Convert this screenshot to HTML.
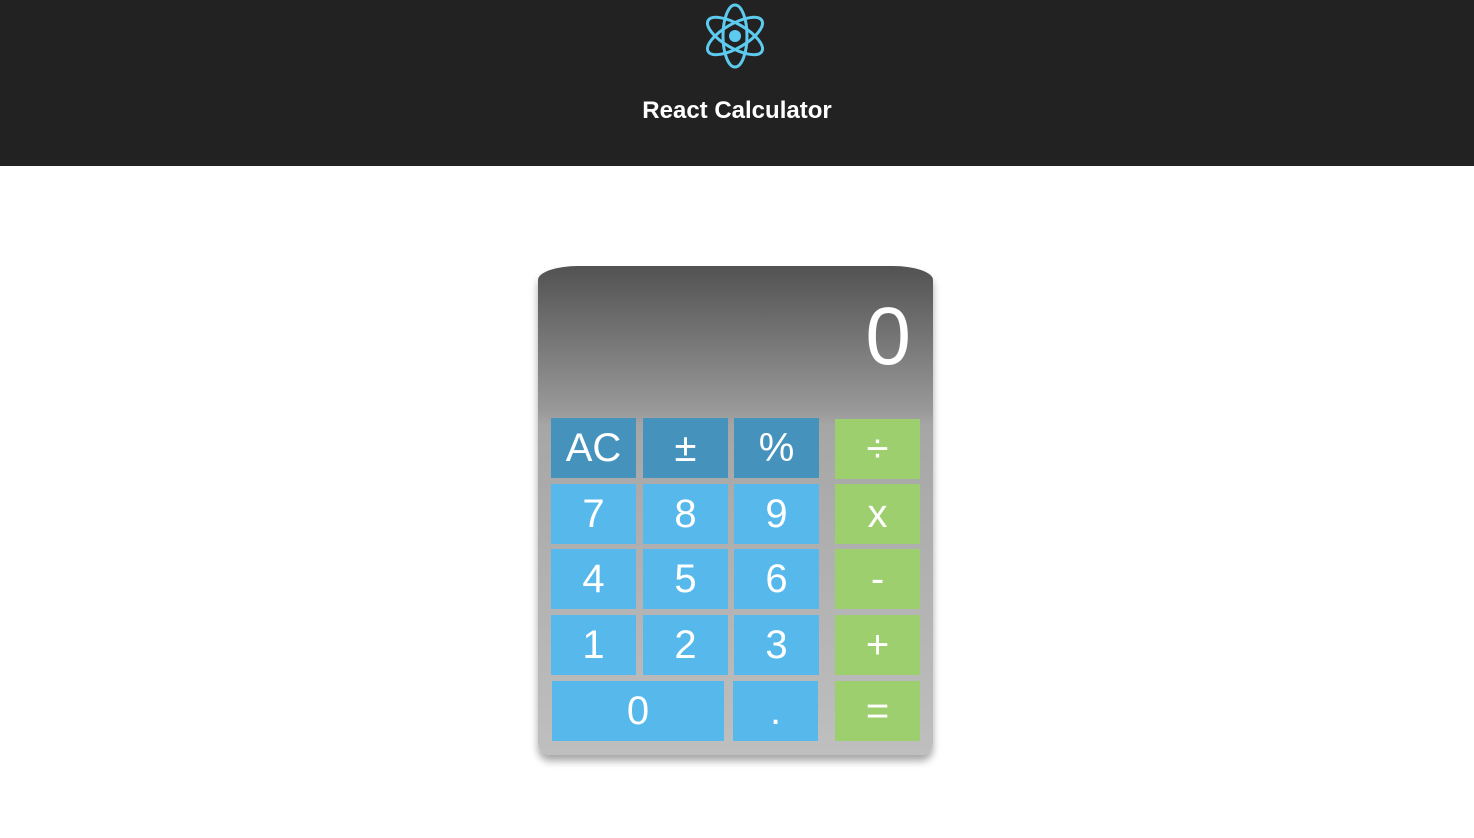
<!DOCTYPE html>
<html><head><meta charset="utf-8"><style>
body{margin:0;width:1474px;height:838px;background:#fff;font-family:"Liberation Sans",Arial,sans-serif;position:relative;overflow:hidden}
.hdr{position:absolute;left:0;top:0;width:1474px;height:166px;background:#222}
.title{position:absolute;left:0;width:1474px;top:97px;text-align:center;color:#fff;font-weight:bold;font-size:24px}
.calc{position:absolute;left:538px;top:266px;width:395px;height:489px;border-radius:40px 40px 12px 12px/14px 14px 12px 12px;background:linear-gradient(#525252 0px,#999 145px,#a6a6a6 160px,#bfbfbf 489px);box-shadow:0 6px 8px rgba(0,0,0,.35)}
.disp{position:absolute;right:22px;top:30px;color:#fff;font-size:82px;line-height:82px}
.b{position:absolute;width:85px;height:60px;color:#fff;font-size:40px;display:flex;align-items:center;justify-content:center;background:#56b8eb}
.d{background:#4593bc}
.g{background:#9ecf6f}
</style></head><body>
<div class="hdr">
<svg style="position:absolute;left:699px;top:0" width="72" height="72" viewBox="-36 -36 72 72">
<g fill="none" stroke="#5ccbef" stroke-width="3"><ellipse rx="31" ry="12" transform="rotate(30)"/><ellipse rx="31" ry="12" transform="rotate(90)"/><ellipse rx="31" ry="12" transform="rotate(150)"/></g>
<circle r="6" fill="#5ccbef"/></svg>
<div class="title">React Calculator</div>
</div>
<div class="calc"><div class="disp">0</div></div>
<div class="b d" style="left:551px;top:418px">AC</div>
<div class="b d" style="left:643px;top:418px">±</div>
<div class="b d" style="left:734px;top:418px">%</div>
<div class="b g" style="left:835px;top:419px">÷</div>
<div class="b" style="left:551px;top:484px">7</div>
<div class="b" style="left:643px;top:484px">8</div>
<div class="b" style="left:734px;top:484px">9</div>
<div class="b g" style="left:835px;top:484px">x</div>
<div class="b" style="left:551px;top:549px">4</div>
<div class="b" style="left:643px;top:549px">5</div>
<div class="b" style="left:734px;top:549px">6</div>
<div class="b g" style="left:835px;top:549px">-</div>
<div class="b" style="left:551px;top:615px">1</div>
<div class="b" style="left:643px;top:615px">2</div>
<div class="b" style="left:734px;top:615px">3</div>
<div class="b g" style="left:835px;top:615px">+</div>
<div class="b" style="left:552px;top:681px;width:172px">0</div>
<div class="b" style="left:733px;top:681px">.</div>
<div class="b g" style="left:835px;top:681px">=</div>
</body></html>
